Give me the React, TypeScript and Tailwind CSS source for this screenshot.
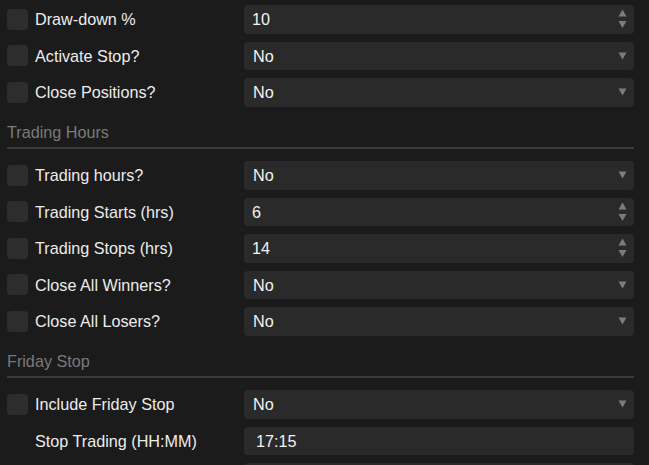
import type { ReactNode } from 'react'

type Field = {
  kind: 'number' | 'select' | 'text'
  label: string
  value: string
  check?: boolean
}

function Spinner() {
  return (
    <svg width="9" height="20" viewBox="0 0 9 20" className="shrink-0" aria-hidden>
      <path d="M4.5 0.5 L8.5 7.5 L0.5 7.5 Z" fill="#7c7c7c" />
      <path d="M0.5 12 L8.5 12 L4.5 19 Z" fill="#7c7c7c" />
    </svg>
  )
}

function Caret() {
  return (
    <svg width="9" height="8" viewBox="0 0 9 8" className="shrink-0" aria-hidden>
      <path d="M0.5 0.5 L8.5 0.5 L4.5 7.5 Z" fill="#7c7c7c" />
    </svg>
  )
}

function Box({ field }: { field: Field }) {
  const pad = field.kind === 'text' ? 'pl-[12px]' : field.kind === 'select' ? 'pl-[9px]' : 'pl-[8px]'
  return (
    <div
      className={`flex h-[28.5px] w-[390px] shrink-0 items-center justify-between rounded-[4px] bg-[#2a2a2a] pr-[7px] ${pad}`}
    >
      <span className="text-[16.2px] leading-[18px] text-[#f2f2f2]">{field.value}</span>
      {field.kind === 'number' && <Spinner />}
      {field.kind === 'select' && <Caret />}
    </div>
  )
}

function Row({ field }: { field: Field }) {
  const hasCheck = field.check !== false
  return (
    <div className="flex h-[36.5px] items-center">
      <div className="flex w-[237px] shrink-0 items-center">
        {hasCheck ? (
          <div className="mr-[7px] h-[21px] w-[21px] shrink-0 rounded-[4px] bg-[#2d2d2d]" />
        ) : (
          <div className="mr-[7px] w-[21px] shrink-0" />
        )}
        <span className="text-[16.2px] leading-[18px] text-[#ececec]">{field.label}</span>
      </div>
      <Box field={field} />
    </div>
  )
}

function Section({ title, children }: { title: string; children: ReactNode }) {
  return (
    <div>
      <div className="mb-[8px] border-b-2 border-[#3a3a3a] pb-[6px] pt-[12.5px]">
        <span className="block text-[16.2px] leading-[18px] text-[#7a7a7a]">{title}</span>
      </div>
      {children}
    </div>
  )
}

const top: Field[] = [
  { kind: 'number', label: 'Draw-down %', value: '10' },
  { kind: 'select', label: 'Activate Stop?', value: 'No' },
  { kind: 'select', label: 'Close Positions?', value: 'No' },
]

const hours: Field[] = [
  { kind: 'select', label: 'Trading hours?', value: 'No' },
  { kind: 'number', label: 'Trading Starts (hrs)', value: '6' },
  { kind: 'number', label: 'Trading Stops (hrs)', value: '14' },
  { kind: 'select', label: 'Close All Winners?', value: 'No' },
  { kind: 'select', label: 'Close All Losers?', value: 'No' },
]

// last row is only its top edge in view
const friday: Field[] = [
  { kind: 'select', label: 'Include Friday Stop', value: 'No' },
  { kind: 'text', label: 'Stop Trading (HH:MM)', value: '17:15', check: false },
  { kind: 'text', label: '', value: '', check: false },
]

export default function App() {
  return (
    <div
      className="h-[465px] w-[649px] overflow-hidden bg-[#1b1b1b] pl-[7px] pr-[15px] pt-[1px]"
      style={{ fontFamily: '"Liberation Sans", Arial, sans-serif' }}
    >
      {top.map((f) => (
        <Row key={f.label} field={f} />
      ))}
      <Section title="Trading Hours">
        {hours.map((f) => (
          <Row key={f.label} field={f} />
        ))}
      </Section>
      <Section title="Friday Stop">
        {friday.map((f, i) => (
          <Row key={i} field={f} />
        ))}
      </Section>
    </div>
  )
}
